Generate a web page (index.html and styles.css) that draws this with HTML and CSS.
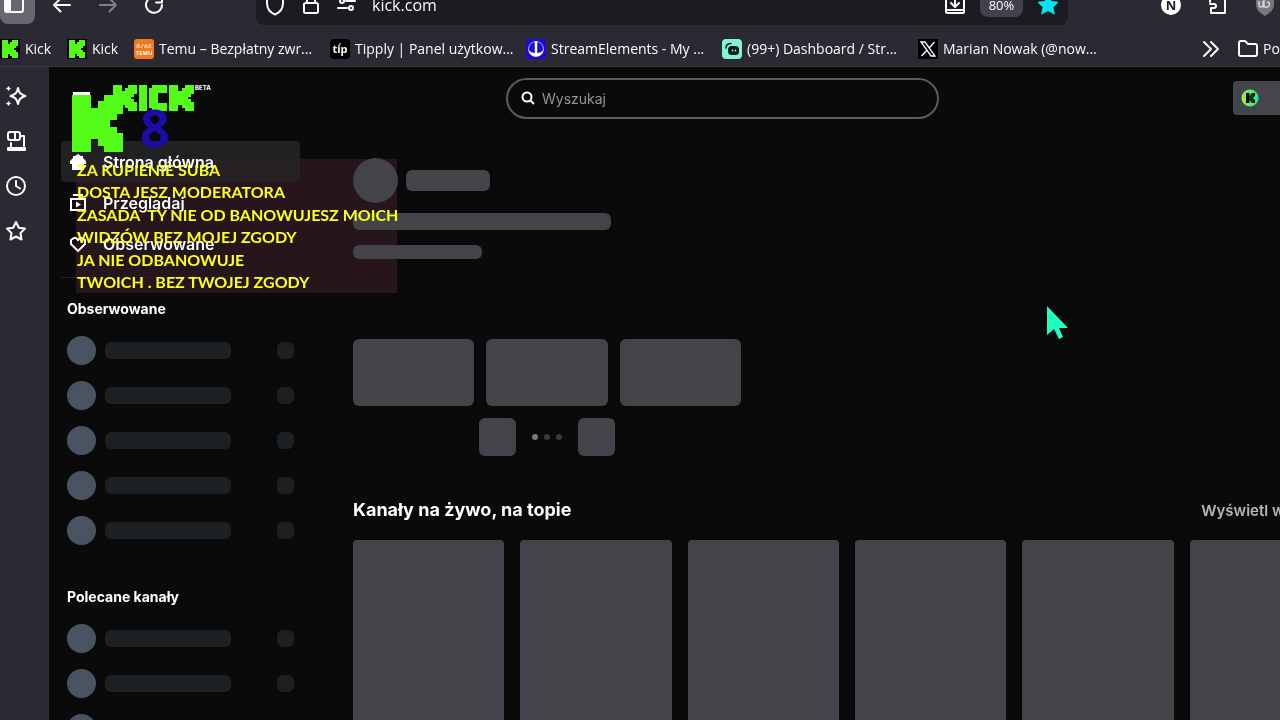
FILE: index.html
```html
<!DOCTYPE html>
<html lang="pl">
<head>
    <meta charset="UTF-8">
    <meta name="viewport" content="width=device-width, initial-scale=1.0">
    <title>Kick</title>
    <link rel="stylesheet" href="styles.css">
</head>
<body>

<!-- Shared logo shape -->
<svg class="defs" width="0" height="0" aria-hidden="true">
    <symbol id="kick-mark" viewBox="0 0 8 9" preserveAspectRatio="none">
        <rect x="0" y="0" width="3" height="9"/>
        <rect x="3" y="2" width="1" height="5"/>
        <rect x="4" y="1" width="1" height="7"/>
        <rect x="5" y="0" width="1" height="9"/>
        <rect x="6" y="0" width="1" height="4"/>
        <rect x="6" y="5" width="1" height="4"/>
        <rect x="7" y="0" width="1" height="3"/>
        <rect x="7" y="6" width="1" height="3"/>
    </symbol>
</svg>

<div class="browser">
    <div class="toolbar">
        <div class="nav-buttons">
            <button class="tool-btn active" aria-label="Panel boczny">
                <svg width="22" height="22" viewBox="0 0 22 22"><rect x="2" y="3" width="18" height="15" rx="2" fill="none" stroke="#fbfbfe" stroke-width="2"/><rect x="2" y="3" width="6" height="15" fill="#fbfbfe"/></svg>
            </button>
            <button class="tool-btn" aria-label="Wstecz">
                <svg width="20" height="20" viewBox="0 0 20 20" class="line"><path d="M18 10H2M8.500 3.500L2 10l6.500 6.500"/></svg>
            </button>
            <button class="tool-btn dim" aria-label="Dalej">
                <svg width="20" height="20" viewBox="0 0 20 20" class="line"><path d="M2 10h16M11.500 3.500L18 10l-6.500 6.500"/></svg>
            </button>
            <button class="tool-btn" aria-label="Odśwież">
                <svg width="20" height="20" viewBox="0 0 20 20" class="line"><path d="M18 10a8 8 0 1 1-2.500-6M18 2v5.500h-6"/></svg>
            </button>
        </div>
        <div class="urlbar">
            <svg width="22" height="22" viewBox="0 0 22 22" class="line"><path d="M11 1L3 4v5c0 6 3 9.500 8 11.500 5-2 8-5.500 8-11.500V4z"/></svg>
            <svg width="22" height="22" viewBox="0 0 22 22" class="line"><rect x="4" y="9" width="14" height="10" rx="1.500"/><path d="M7 9V5a4 4 0 0 1 8 0v4"/></svg>
            <svg width="22" height="22" viewBox="0 0 22 22" class="line"><circle cx="6" cy="7" r="2"/><path d="M10 7h9M2 14h9"/><circle cx="15" cy="14" r="2"/></svg>
            <input class="address" type="text" value="kick.com" aria-label="Adres">
            <button class="url-btn" aria-label="Pobierz">
                <svg width="22" height="22" viewBox="0 0 22 22" class="line"><path d="M11 1v11M7 9l4 4 4-4M5 5H3a1 1 0 0 0-1 1v12a1 1 0 0 0 1 1h16a1 1 0 0 0 1-1V6a1 1 0 0 0-1-1h-2M2 16h18"/></svg>
            </button>
            <button class="zoom-level">80%</button>
            <button class="url-btn" aria-label="Zakładka">
                <svg width="22" height="22" viewBox="0 0 22 22"><path d="M11 1l3 6.500 7 .8-5.200 4.700L17.300 20 11 16.500 4.700 20l1.500-7L1 8.300l7-.8z" fill="#00e5f5" stroke="#00e5f5" stroke-linejoin="round"/></svg>
            </button>
        </div>
        <div class="extensions">
            <button class="url-btn letter-icon" aria-label="Notion">N</button>
            <button class="url-btn" aria-label="Rozszerzenia">
                <svg width="20" height="22" viewBox="0 0 20 22" class="line"><path d="M2 8V4h5V2a2 2 0 0 1 4 0v2h6v15H3v-5h3a2 2 0 0 0 0-4H2"/></svg>
            </button>
            <button class="url-btn shield" aria-label="uBlock">
                <svg width="20" height="22" viewBox="0 0 20 22"><path d="M10 0l9 3v7c0 6-4 9-9 12-5-3-9-6-9-12V3z" fill="#77777c"/><path d="M4 7v4a2 2 0 0 0 4 0V7M9 5v8h3a2 2 0 0 0 0-5" fill="none" stroke="#d5d5d8" stroke-width="1.500"/></svg>
            </button>
        </div>
    </div>

    <nav class="bookmarks">
        <a href="#" class="bookmark short"><svg width="20" height="20" shape-rendering="crispEdges"><rect width="20" height="20" fill="#000"/><use href="#kick-mark" x="2" y="1" width="16" height="18" fill="#53fc18"/></svg><span>Kick</span></a>
        <a href="#" class="bookmark short"><svg width="20" height="20" shape-rendering="crispEdges"><rect width="20" height="20" fill="#000"/><use href="#kick-mark" x="2" y="1" width="16" height="18" fill="#53fc18"/></svg><span>Kick</span></a>
        <a href="#" class="bookmark"><svg width="20" height="20" viewBox="0 0 20 20"><rect width="20" height="20" rx="3" fill="#f27a1a"/><path d="M3 9V6l2-1v4M7 9l2-4M11 9V6h2v3M15 5l2 4M14 9l3-4" stroke="#ffe3cb" fill="none"/><text x="10" y="16" text-anchor="middle" font-size="6" class="icon-text">TEMU</text></svg><span>Temu – Bezpłatny zwr...</span></a>
        <a href="#" class="bookmark"><svg width="20" height="20" viewBox="0 0 20 20"><rect width="20" height="20" rx="4" fill="#000"/><text x="10" y="14" text-anchor="middle" font-size="11" class="icon-text">tip</text><circle cx="10" cy="5" r="1" fill="#3be37c"/></svg><span>Tipply | Panel użytkow...</span></a>
        <a href="#" class="bookmark"><svg width="20" height="20" viewBox="0 0 20 20"><rect width="20" height="20" fill="#1b0bd2"/><circle cx="10" cy="10" r="7.500" fill="none" stroke="#a8a4ff"/><path d="M2.500 10c1 3 4 4 7.500 4s6.500-1 7.500-4c0 4-3 7.500-7.500 7.500S2.500 14 2.500 10z" fill="#fff"/><path d="M10 2v13" stroke="#fff" stroke-width="2.500"/></svg><span>StreamElements - My ...</span></a>
        <a href="#" class="bookmark"><svg width="20" height="20" viewBox="0 0 20 20"><rect width="20" height="20" rx="4" fill="#80f5d2"/><rect x="6" y="7" width="11" height="9" rx="3.500" fill="#09161d"/><path d="M4 9c0-3 2-4.500 5-4.500" fill="none" stroke="#09161d" stroke-width="1.500" stroke-linecap="round"/><path d="M10.500 10.500v2M13.500 10.500v2" stroke="#80f5d2" stroke-width="1.500"/></svg><span>(99+) Dashboard / Str...</span></a>
        <a href="#" class="bookmark"><svg width="20" height="20" viewBox="0 0 20 20"><rect width="20" height="20" fill="#000"/><path d="M3 3h4l10 14h-4zM16.500 3L11 9.300M9 11.300L3.500 17" fill="none" stroke="#fff" stroke-width="1.300"/></svg><span>Marian Nowak (@now...</span></a>
        <div class="bookmarks-end">
            <button class="url-btn" aria-label="Więcej zakładek">
                <svg width="20" height="20" viewBox="0 0 20 20" class="line"><path d="M3 3l7 7-7 7M10 3l7 7-7 7"/></svg>
            </button>
            <a href="#" class="bookmark"><svg width="20" height="20" viewBox="0 0 20 20" class="line"><path d="M1 4a2 2 0 0 1 2-2h4l3 3h7a2 2 0 0 1 2 2v8a2 2 0 0 1-2 2H3a2 2 0 0 1-2-2z"/></svg><span>Pozostałe zakładki</span></a>
        </div>
    </nav>
</div>

<div class="window">
    <aside class="rail">
        <button aria-label="Asystent"><svg width="22" height="22" viewBox="0 0 22 22" class="line"><path d="M13 3c1 5 2.500 6.500 7.500 8-5 1.500-6.500 3-7.500 8-1-5-2.500-6.500-7.500-8 5-1.500 6.500-3 7.500-8z"/><path d="M3.500 2v3M2 3.500h3M3.500 17v3M2 18.500h3" stroke-width="1.500"/></svg></button>
        <button aria-label="Karty z innych urządzeń"><svg width="22" height="22" viewBox="0 0 22 22" class="line"><rect x="3" y="2" width="12" height="8" rx="2"/><path d="M10 2v8M16 6h3v10M6 13v4"/><path d="M3 18h17v2H3z" fill="#fbfbfe"/></svg></button>
        <button aria-label="Historia"><svg width="22" height="22" viewBox="0 0 22 22" class="line"><circle cx="11" cy="11" r="9"/><path d="M11 6v5l4 2.500"/></svg></button>
        <button aria-label="Zakładki"><svg width="22" height="22" viewBox="0 0 22 22" class="line"><path d="M11 2l2.800 5.800 6.200.8-4.500 4.400 1 6.500-5.500-3-5.500 3 1-6.500L2 8.600l6.200-.8z"/></svg></button>
    </aside>

    <div class="app">
        <header class="app-header">
            <button class="menu-btn" aria-label="Menu"></button>
            <label class="search">
                <svg width="14" height="14" viewBox="0 0 14 14"><circle cx="6" cy="6" r="4.500" fill="none" stroke="#fff" stroke-width="2"/><path d="M9.500 9.500L13 13" stroke="#fff" stroke-width="2"/></svg>
                <input type="text" placeholder="Wyszukaj" aria-label="Wyszukaj">
            </label>
            <button class="kicks" aria-label="Kicks">
                <svg width="18" height="18"><defs><linearGradient id="coin"><stop offset="0" stop-color="#a2f52c"/><stop offset="1" stop-color="#1de5a4"/></linearGradient></defs><circle cx="9" cy="9" r="8.500" fill="url(#coin)"/><use href="#kick-mark" x="5" y="4" width="9" height="10" fill="#000"/></svg>
            </button>
        </header>

        <div class="columns">
            <aside class="sidebar">
                <nav class="menu">
                    <a href="#" class="current"><svg width="18" height="18" viewBox="0 0 18 18"><path d="M9 1L6 3H4v2L1 8v3h2v6h12v-6h2V8l-3-3V3h-2z" fill="#fff"/></svg>Strona główna</a>
                    <a href="#"><svg width="18" height="18" viewBox="0 0 18 18"><path d="M4 1h10M2 5h14v11H2z" fill="none" stroke="#fff" stroke-width="2"/><path d="M7 7.500v6l5-3z" fill="#fff"/></svg>Przeglądaj</a>
                    <a href="#"><svg width="18" height="18" viewBox="0 0 18 18"><path d="M9 16L2 9V5l3-2h2l2 2 2-2h2l3 2v4z" fill="none" stroke="#fff" stroke-width="2"/></svg>Obserwowane</a>
                </nav>
                <section class="channels">
                    <h2>Obserwowane</h2>
                    <ul>
                        <li><i class="avatar"></i><i class="name"></i><i class="count"></i></li>
                        <li><i class="avatar"></i><i class="name"></i><i class="count"></i></li>
                        <li><i class="avatar"></i><i class="name"></i><i class="count"></i></li>
                        <li><i class="avatar"></i><i class="name"></i><i class="count"></i></li>
                        <li><i class="avatar"></i><i class="name"></i><i class="count"></i></li>
                    </ul>
                </section>
                <section class="channels">
                    <h2>Polecane kanały</h2>
                    <ul>
                        <li><i class="avatar"></i><i class="name"></i><i class="count"></i></li>
                        <li><i class="avatar"></i><i class="name"></i><i class="count"></i></li>
                        <li><i class="avatar"></i><i class="name"></i><i class="count"></i></li>
                    </ul>
                </section>
            </aside>

            <main class="content">
                <!-- Featured stream placeholder -->
                <section class="featured">
                    <div class="streamer"><i class="bone round"></i><i class="bone nick"></i></div>
                    <i class="bone title"></i>
                    <i class="bone category"></i>
                    <div class="thumbs"><i class="bone"></i><i class="bone"></i><i class="bone"></i></div>
                    <div class="pager">
                        <button class="bone" aria-label="Poprzedni"></button>
                        <div class="dots"><i class="on"></i><i></i><i></i></div>
                        <button class="bone" aria-label="Następny"></button>
                    </div>
                </section>
                <section>
                    <div class="section-head">
                        <h1>Kanały na żywo, na topie</h1>
                        <a href="#">Wyświetl wszystko</a>
                    </div>
                    <div class="cards"><i class="bone"></i><i class="bone"></i><i class="bone"></i><i class="bone"></i><i class="bone"></i><i class="bone"></i></div>
                </section>
            </main>
        </div>
    </div>
</div>

<!-- Stream overlay -->
<div class="overlay-logo">
    <svg width="142" height="68" viewBox="0 0 142 68" fill="#53fc18" shape-rendering="crispEdges">
        <use href="#kick-mark" x="0" y="11" width="51" height="57"/>
        <use href="#kick-mark" x="41" y="1" width="24" height="26"/>
        <rect x="67" y="1" width="8" height="26"/>
        <path d="M80 1h15v8h-9v10h9v8H80v-3h-3V4h3z"/>
        <use href="#kick-mark" x="97" y="1" width="25" height="26"/>
    </svg>
    <span class="beta">BETA</span>
    <span class="number">8</span>
</div>
<div class="notice">
    <p>ZA KUPIENIE SUBA</p>
    <p>DOSTA JESZ MODERATORA</p>
    <p>ZASADA&nbsp; TY NIE OD BANOWUJESZ MOICH</p>
    <p>WIDZÓW BEZ MOJEJ ZGODY</p>
    <p>JA NIE ODBANOWUJE</p>
    <p>TWOICH . BEZ TWOJEJ ZGODY</p>
</div>
<svg class="cursor" width="24" height="36" viewBox="0 0 24 36"><path d="M1 1v29l7-6 5 10 4-2-4-9h9z" fill="#1fffbf"/></svg>

</body>
</html>
```

FILE: styles.css
```css
* {
    box-sizing: border-box;
}
body {
    margin: 0;
    height: 100vh;
    overflow: hidden;
    display: flex;
    flex-direction: column;
    background-color: #0a0a0a;
    color: #fff;
    font-family: Inter, sans-serif;
}
button {
    padding: 0;
    border: none;
    background: none;
    color: inherit;
    font-family: inherit;
}
a {
    color: inherit;
    text-decoration: none;
}
svg {
    flex: none;
    display: block;
}
.defs {
    position: absolute;
}
.line {
    fill: none;
    stroke: #fbfbfe;
    stroke-width: 2;
    stroke-linecap: round;
    stroke-linejoin: round;
}
.icon-text {
    fill: #fff;
    font-family: "Open Sans", sans-serif;
    font-weight: bold;
}

/* Browser chrome */
.browser {
    flex: none;
    background-color: #2b2a33;
    color: #fbfbfe;
    font-family: "Open Sans", sans-serif;
    border-bottom: 1px solid #3a3942;
}
.toolbar {
    display: flex;
    height: 40px;
    margin-top: -15px; /* upper part is outside the window */
}
.nav-buttons {
    display: flex;
    align-items: center;
    gap: 8px;
    width: 256px;
}
.tool-btn {
    display: flex;
    align-items: center;
    justify-content: center;
    width: 38px;
    height: 38px;
    border-radius: 8px;
}
.tool-btn.active {
    justify-content: flex-start;
    padding-left: 3px;
    width: 35px;
    background-color: #68676f;
}
.tool-btn.dim {
    opacity: 0.4;
}
.urlbar {
    flex: 1;
    display: flex;
    align-items: center;
    gap: 14px;
    padding: 0 9px 0 8px;
    border-radius: 8px;
    background-color: #1c1b22;
}
.address {
    flex: 1;
    min-width: 0;
    padding: 0;
    border: none;
    background: none;
    color: #fbfbfe;
    font-family: inherit;
    font-size: 16px;
}
.zoom-level {
    width: 43px;
    height: 24px;
    border-radius: 8px;
    background-color: #42414d;
    font-size: 13px;
}
.extensions {
    display: flex;
    align-items: center;
    gap: 27px;
    width: 212px;
    padding-left: 93px;
}
.letter-icon {
    width: 20px;
    height: 20px;
    border-radius: 50%;
    background-color: #fff;
    color: #222;
    font-size: 13px;
    font-weight: bold;
}
.bookmarks {
    display: flex;
    align-items: center;
    gap: 16px;
    height: 41px;
    padding-top: 6px;
    font-size: 14px;
    white-space: nowrap;
    overflow: hidden;
}
.bookmark {
    flex: 0 0 180px;
    display: flex;
    align-items: center;
    gap: 5px;
    min-width: 0;
}
.bookmark.short {
    flex-basis: 51px;
}
.bookmarks-end {
    display: flex;
    gap: 17px;
    margin-left: auto;
    margin-right: -138px;
}

/* Browser sidebar */
.window {
    flex: 1;
    display: flex;
    min-height: 0;
}
.rail {
    flex: 0 0 49px;
    display: flex;
    flex-direction: column;
    gap: 23px;
    padding: 18px 5px;
    background-color: #2b2a33;
}
.rail button {
    width: 22px;
    height: 22px;
}

/* Page */
.app {
    flex: 1;
    min-width: 0;
    overflow: hidden;
}
.app-header {
    display: flex;
    align-items: center;
    justify-content: space-between;
    height: 62px;
    padding-left: 24px;
}
.menu-btn {
    width: 17px;
    height: 12px;
    border-top: 3px solid #fff;
}
.search {
    display: flex;
    align-items: center;
    gap: 7px;
    width: 433px;
    height: 41px;
    margin-left: 122px;
    padding: 0 13px;
    border: 2px solid #5c5c5c;
    border-radius: 21px;
}
.search input {
    flex: 1;
    padding: 0;
    border: none;
    outline: none;
    background: none;
    color: #fff;
    font-family: inherit;
    font-size: 14px;
}
.search input::placeholder {
    color: #92959b;
}
.kicks {
    width: 47px;
    height: 34px;
    padding-left: 8px;
    border-radius: 4px 0 0 4px;
    background-color: #45464c;
}
.columns {
    display: flex;
    gap: 53px;
    padding: 12px 0 0 12px;
}
.sidebar {
    flex: 0 0 239px;
}
.menu {
    padding-bottom: 13px;
    margin-bottom: 22px;
    border-bottom: 1px solid #1f2023;
}
.menu a {
    display: flex;
    align-items: center;
    gap: 16px;
    height: 41px;
    padding-left: 8px;
    border-radius: 4px;
    font-size: 16px;
    font-weight: 600;
}
.menu .current {
    background-color: #1f2122;
}
.channels {
    padding: 0 6px;
    margin-bottom: 35px;
}
.channels h2 {
    margin: 0 0 10px;
    font-size: 14px;
    line-height: 18px;
    font-weight: 700;
}
.channels ul {
    margin: 0;
    padding: 0;
    list-style: none;
}
.channels li {
    display: flex;
    align-items: center;
    height: 45px;
}
.avatar {
    width: 29px;
    height: 29px;
    border-radius: 50%;
    background-color: #4a5361;
}
.name {
    width: 126px;
    height: 17px;
    margin-left: 9px;
    border-radius: 6px;
    background-color: #1d2023;
}
.count {
    width: 17px;
    height: 17px;
    margin-left: auto;
    border-radius: 6px;
    background-color: #1d2023;
}

.content {
    flex: 1;
    min-width: 0;
    margin-right: -61px; /* runs past the right edge */
    padding-top: 17px;
}
.bone {
    display: block;
    border-radius: 6px;
    background-color: #434449;
}
.streamer {
    display: flex;
    align-items: center;
    gap: 8px;
}
.round {
    width: 45px;
    height: 45px;
    border-radius: 50%;
}
.nick {
    width: 84px;
    height: 21px;
}
.title {
    width: 258px;
    height: 17px;
    margin-top: 10px;
}
.category {
    width: 129px;
    height: 14px;
    margin-top: 15px;
}
.featured {
    width: 388px;
    margin-bottom: 41px;
}
.thumbs {
    display: grid;
    grid-template-columns: repeat(3, 1fr);
    grid-auto-rows: 67px;
    gap: 12px;
    margin-top: 80px;
}
.pager {
    display: flex;
    justify-content: center;
    gap: 16px;
    margin-top: 12px;
}
.pager .bone {
    width: 37px;
    height: 38px;
}
.dots {
    display: flex;
    align-items: center;
    gap: 6px;
}
.dots i {
    width: 6px;
    height: 6px;
    border-radius: 50%;
    background-color: #3a3a3c;
}
.dots .on {
    background-color: #7a7a7c;
}
.section-head {
    display: flex;
    align-items: center;
    justify-content: space-between;
    margin-bottom: 17px;
}
.section-head h1 {
    margin: 0;
    font-size: 18px;
    line-height: 26px;
    font-weight: 700;
}
.section-head a {
    color: #b4b6ba;
    font-size: 15px;
    font-weight: 600;
}
.cards {
    display: grid;
    grid-template-columns: repeat(6, 1fr);
    grid-auto-rows: 200px;
    gap: 16px;
}
.cards .bone {
    border-radius: 4px;
}

/* Things drawn over the page */
.overlay-logo {
    position: absolute;
    left: 72px;
    top: 84px;
}
.beta {
    position: absolute;
    left: 123px;
    top: 0;
    font-size: 6px;
    line-height: 8px;
    font-weight: 800;
}
.number {
    position: absolute;
    left: 68px;
    top: 17px;
    color: #1c0cab;
    font-family: "Open Sans", sans-serif;
    font-size: 52px;
    line-height: 52px;
    font-weight: bold;
}
.notice {
    position: absolute;
    left: 76px;
    top: 159px;
    width: 321px;
    height: 134px;
    padding-left: 1px;
    display: flex;
    flex-direction: column;
    justify-content: space-between;
    color: #fbff1e;
    font-family: Lato, sans-serif;
    font-size: 16px;
    font-weight: bold;
    white-space: nowrap;
}
/* tint that keeps the brighter parts of the page below as they are */
.notice::before {
    content: "";
    position: absolute;
    inset: 0;
    background-color: #26151a;
    mix-blend-mode: lighten;
}
.notice p {
    position: relative;
    margin: 0;
    line-height: 22px;
}
.cursor {
    position: absolute;
    left: 1046px;
    top: 305px;
}
```
